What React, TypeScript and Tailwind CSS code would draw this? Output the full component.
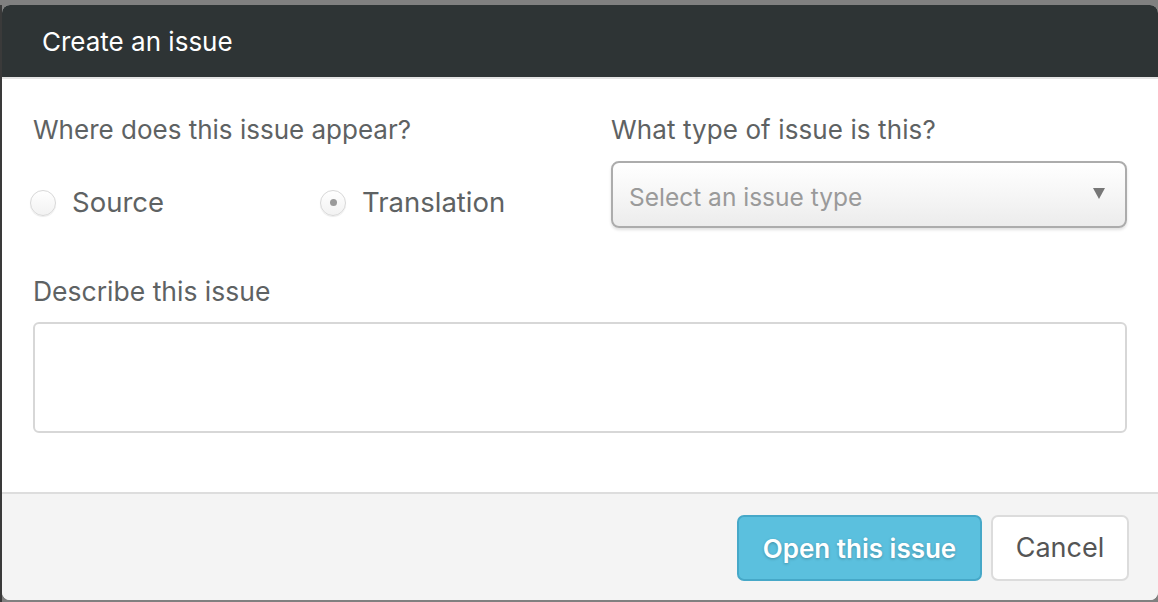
export default function App() {
  const font = { fontFamily: "Inter, 'Noto Sans', sans-serif" };
  return (
    <div className="w-[1158px] h-[602px] bg-[#808080] pt-[5px] flex overflow-hidden" style={font}>
      <div className="w-[2px] h-full bg-[#3a3a3a] shrink-0" />
      <div className="flex-1 h-[595px] rounded-[8px] overflow-hidden flex flex-col bg-white">
        <div className="h-[72px] shrink-0 bg-[#2e3435] flex items-center pl-[40px] border-b-2 border-[#e4e4e4] box-content">
          <span className="text-white text-[26px]">Create an issue</span>
        </div>

        <div className="flex-1 px-[31px] pt-[34px]">
          <div className="grid grid-cols-[1fr_516px] gap-x-[32px]">
            <div>
              <div className="text-[26px] leading-[34px] text-[#5e6263]">Where does this issue appear?</div>
              <div className="flex mt-[35px] -ml-[3px]">
                <label className="w-[290px] flex items-center gap-[16px]">
                  <span className="w-[26px] h-[26px] rounded-full border border-[#d8d8d8] bg-gradient-to-b from-white to-[#f2f2f2] shadow-[0_1px_1px_rgba(0,0,0,0.08)]" />
                  <span className="text-[27.5px] text-[#5e6263]">Source</span>
                </label>
                <label className="flex items-center gap-[16px]">
                  <span className="w-[26px] h-[26px] rounded-full border border-[#d8d8d8] bg-gradient-to-b from-white to-[#f2f2f2] shadow-[0_1px_1px_rgba(0,0,0,0.08)] flex items-center justify-center">
                    <span className="w-[7px] h-[7px] rounded-full bg-[#9a9a9a]" />
                  </span>
                  <span className="text-[27.5px] text-[#5e6263]">Translation</span>
                </label>
              </div>
            </div>
            <div>
              <div className="text-[26px] leading-[34px] text-[#5e6263] tracking-[0.1px]">What type of issue is this?</div>
              <div className="mt-[14px] h-[67px] rounded-[8px] border-2 border-[#acacac] bg-gradient-to-b from-white via-[#f6f6f6] to-[#ececec] shadow-[0_2px_3px_rgba(0,0,0,0.12)] flex items-center justify-between pl-[16px] pr-[20px] pt-[6px]">
                <span className="text-[24.5px] text-[#9a9a9a]">Select an issue type</span>
                <svg width="12" height="11" viewBox="0 0 12 11" className="-mt-[8px]">
                  <path d="M0 0h12L6 11z" fill="#777" />
                </svg>
              </div>
            </div>
          </div>

          <div className="text-[26.5px] leading-[34px] text-[#5e6263] mt-[46px]">Describe this issue</div>
          <div className="mt-[14px] h-[111px] rounded-[6px] border-2 border-[#d7d7d7]" />
        </div>

        <div className="h-[108px] shrink-0 bg-[#f4f4f4] border-t-2 border-[#dddddd] flex items-center justify-end gap-[9px] pr-[29px] pt-[2px]">
          <button className="h-[66px] w-[245px] rounded-[7px] bg-[#5bc0de] border-2 border-[#46a8c8] text-white text-[26px] font-semibold [text-shadow:0_1px_3px_rgba(0,0,0,0.25)]">
            Open this issue
          </button>
          <button className="h-[66px] w-[138px] rounded-[7px] bg-white border-2 border-[#dcdcdc] text-[#555] text-[27px]">
            Cancel
          </button>
        </div>
      </div>
    </div>
  );
}
